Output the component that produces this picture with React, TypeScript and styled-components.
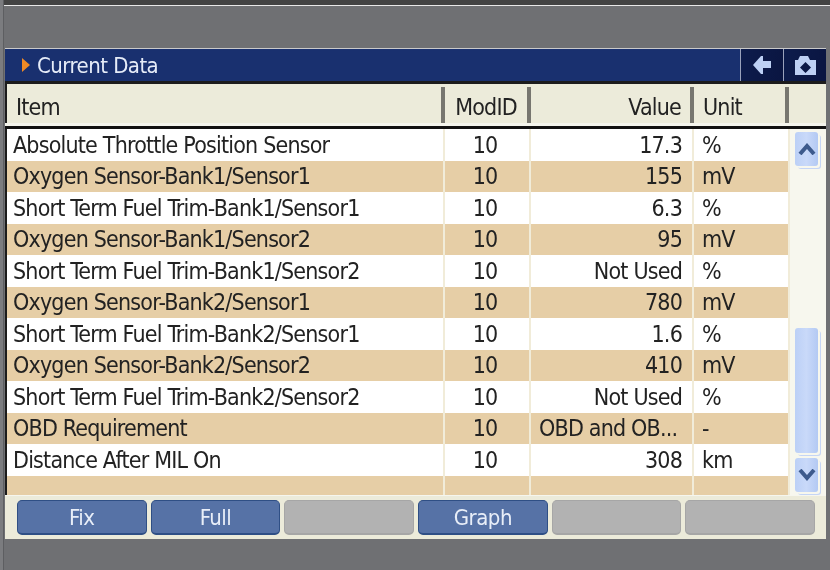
import React from 'react'
import styled, { createGlobalStyle } from 'styled-components'

const GlobalStyle = createGlobalStyle`
  html, body {
    margin: 0;
    padding: 0;
    background: #6f7073;
  }
`

const Page = styled.div`
  width: 830px;
  height: 570px;
  overflow: hidden;
  background: #6f7073;
  display: flex;
  font-family: 'DejaVu Sans Condensed', 'DejaVu Sans', sans-serif;
`

const LeftEdge = styled.div`
  width: 4px;
  flex-shrink: 0;
  background: #7b7c7f;
  border-right: 1px solid #5d5e61;
  box-sizing: border-box;
`

const Main = styled.div`
  flex: 1;
  min-width: 0;
  display: flex;
  flex-direction: column;
`

const TopStrip = styled.div`
  height: 5px;
  background: #434343;
  border-bottom: 1px solid #e8e8e8;
  flex-shrink: 0;
`

const Panel = styled.div`
  margin: 42px 4px 0 1px;
  height: 490px;
  flex-shrink: 0;
  background: #ecebda;
  border-top: 1px solid #c9c9c9;
  display: flex;
  flex-direction: column;
`

const TitleBar = styled.div`
  height: 32px;
  flex-shrink: 0;
  background: #19306f;
  color: #e6ecf8;
  display: flex;
  align-items: center;
  padding-left: 17px;
  font-size: 22px;
  filter: blur(0.4px);
`

const TitleText = styled.span`
  margin-left: 7px;
  padding-top: 1px;
  flex: 1;
  letter-spacing: -0.55px;
`

const ToolButton = styled.div`
  width: 42px;
  height: 100%;
  background: linear-gradient(100deg, #0d1c4c, #0a1541);
  border-left: 1px solid #9aa2bb;
  display: flex;
  align-items: center;
  justify-content: center;
`

const Grid = styled.div`
  flex: 1;
  display: flex;
  flex-direction: column;
  min-height: 0;
  border-top: 3px solid #1c1c1c;
  border-left: 2px solid #1c1c1c;
`

const HeaderRow = styled.div`
  display: grid;
  grid-template-columns: 438px 86px 163px 95px 1fr;
  height: 39px;
  flex-shrink: 0;
  background: #ecebda;
`

const HeaderCell = styled.div<{ $right?: boolean; $center?: boolean; $plain?: boolean }>`
  display: flex;
  align-items: center;
  justify-content: ${p => (p.$right ? 'flex-end' : p.$center ? 'center' : 'flex-start')};
  padding: 4px 9px 0;
  font-size: 23px;
  letter-spacing: -0.8px;
  color: #222;
  box-sizing: border-box;
  border-right: ${p => (p.$plain ? '0' : '4px solid #77766f')};
  margin-top: 3px;
  filter: blur(0.4px);
`

const HeaderRule = styled.div`
  height: 6px;
  flex-shrink: 0;
  background: #111;
  border-top: 3px solid #f4f4ec;
  box-sizing: border-box;
  margin-left: -2px;
`

const Body = styled.div`
  flex: 1;
  min-height: 0;
  display: flex;
`

const Rows = styled.div`
  width: 783px;
  flex-shrink: 0;
  overflow: hidden;
  background: #fff;
`

const Row = styled.div<{ $alt: boolean }>`
  display: grid;
  grid-template-columns: 438px 86px 163px 1fr;
  height: 31.5px;
  background: ${p => (p.$alt ? '#e6cea6' : '#fff')};
  color: #222;
`

const Cell = styled.div<{ $align?: string; $inset?: number }>`
  display: flex;
  align-items: center;
  justify-content: ${p => p.$align || 'flex-start'};
  padding: 0 10px 0 ${p => p.$inset ?? 6}px;
  font-size: 23px;
  letter-spacing: -0.8px;
  white-space: nowrap;
  overflow: hidden;
  box-sizing: border-box;
  border-right: 2px solid #f1ecd9;
  filter: blur(0.4px);
`

const ScrollBar = styled.div`
  flex: 1;
  background: #f7f7ee;
  display: flex;
  flex-direction: column;
  padding: 3px 8px 3px 5px;
  box-sizing: border-box;
`

const ScrollButton = styled.div`
  height: 34px;
  flex-shrink: 0;
  background: linear-gradient(90deg, #bcd0f6, #c9d9f9 50%, #b3c9f3);
  border-radius: 3px;
  box-shadow: 2px 2px 0 #f7f7ee, 3px 3px 0 #c5d5f5;
  display: flex;
  align-items: center;
  justify-content: center;
`

const ScrollThumb = styled.div`
  height: 125px;
  margin: auto 0 5px;
  flex-shrink: 0;
  background: linear-gradient(90deg, #bcd0f6, #c9d9f9 50%, #b3c9f3);
  border-radius: 3px;
  box-shadow: 2px 2px 0 #f7f7ee, 3px 3px 0 #c5d5f5;
`

const Footer = styled.div`
  height: 44px;
  flex-shrink: 0;
  box-sizing: border-box;
  padding: 4px 11px 0 12px;
  display: grid;
  grid-template-columns: repeat(6, 1fr);
  column-gap: 4px;
  align-items: start;
  background: #ecebda;
  border-top: 1px solid #f6f6ee;
`

const FooterButton = styled.div<{ $active: boolean }>`
  height: 35px;
  box-sizing: border-box;
  padding-top: 1px;
  border-radius: 5px;
  background: ${p => (p.$active ? '#5672a6' : '#b2b2b2')};
  border: 1px solid ${p => (p.$active ? '#2f4f85' : '#a6a6a6')};
  border-bottom-width: 2px;
  color: #e8eef8;
  font-size: 22px;
  letter-spacing: -0.5px;
  display: flex;
  align-items: center;
  justify-content: center;
  filter: blur(0.4px);
`

const data: [string, string, string][] = [
  ['Absolute Throttle Position Sensor', '17.3', '%'],
  ['Oxygen Sensor-Bank1/Sensor1', '155', 'mV'],
  ['Short Term Fuel Trim-Bank1/Sensor1', '6.3', '%'],
  ['Oxygen Sensor-Bank1/Sensor2', '95', 'mV'],
  ['Short Term Fuel Trim-Bank1/Sensor2', 'Not Used', '%'],
  ['Oxygen Sensor-Bank2/Sensor1', '780', 'mV'],
  ['Short Term Fuel Trim-Bank2/Sensor1', '1.6', '%'],
  ['Oxygen Sensor-Bank2/Sensor2', '410', 'mV'],
  ['Short Term Fuel Trim-Bank2/Sensor2', 'Not Used', '%'],
  ['OBD Requirement', 'OBD and OB...', '-'],
  ['Distance After MIL On', '308', 'km'],
  ['', '', ''],
]

const buttons = ['Fix', 'Full', '', 'Graph', '', '']

export default function App() {
  return (
    <Page>
      <GlobalStyle />
      <LeftEdge />
      <Main>
        <TopStrip />
        <Panel>
          <TitleBar>
            <svg width="8" height="16" viewBox="0 0 8 16">
              <path d="M0 1 L8 8 L0 15 Z" fill="#f08a24" />
            </svg>
            <TitleText>Current Data</TitleText>
            <ToolButton>
              <svg width="18" height="18" viewBox="0 0 18 18">
                <path d="M0 9 L8 0 L10 0 L10 5 L18 5 L18 12 L10 12 L10 18 L8 18 Z" fill="#bdd0f4" />
              </svg>
            </ToolButton>
            <ToolButton>
              <svg width="21" height="19" viewBox="0 0 21 19">
                <path
                  fillRule="evenodd"
                  d="M0 4 H3 L5 0 H13 L15 4 H21 V19 H0 Z M10.5 6 L5 11.5 L10.5 17 L16 11.5 Z"
                  fill="#bdd0f4"
                />
              </svg>
            </ToolButton>
          </TitleBar>
          <Grid>
            <HeaderRow>
              <HeaderCell>Item</HeaderCell>
              <HeaderCell $center>ModID</HeaderCell>
              <HeaderCell $right>Value</HeaderCell>
              <HeaderCell>Unit</HeaderCell>
              <HeaderCell $plain />
            </HeaderRow>
            <HeaderRule />
            <Body>
              <Rows>
                {data.map((r, i) => (
                  <Row key={i} $alt={i % 2 === 1}>
                    <Cell>{r[0]}</Cell>
                    <Cell $align="center">{r[0] ? '10' : ''}</Cell>
                    <Cell
                      $align={r[1].includes('...') ? 'flex-start' : 'flex-end'}
                      $inset={8}
                    >
                      {r[1]}
                    </Cell>
                    <Cell $inset={8}>{r[2]}</Cell>
                  </Row>
                ))}
              </Rows>
              <ScrollBar>
                <ScrollButton>
                  <svg width="18" height="12" viewBox="0 0 18 12">
                    <path d="M2 11 L9 3 L16 11" fill="none" stroke="#3d5a8c" strokeWidth="4" />
                  </svg>
                </ScrollButton>
                <ScrollThumb />
                <ScrollButton>
                  <svg width="18" height="12" viewBox="0 0 18 12">
                    <path d="M2 1 L9 9 L16 1" fill="none" stroke="#3d5a8c" strokeWidth="4" />
                  </svg>
                </ScrollButton>
              </ScrollBar>
            </Body>
          </Grid>
          <Footer>
            {buttons.map((b, i) => (
              <FooterButton key={i} $active={b !== ''}>
                {b}
              </FooterButton>
            ))}
          </Footer>
        </Panel>
      </Main>
    </Page>
  )
}
